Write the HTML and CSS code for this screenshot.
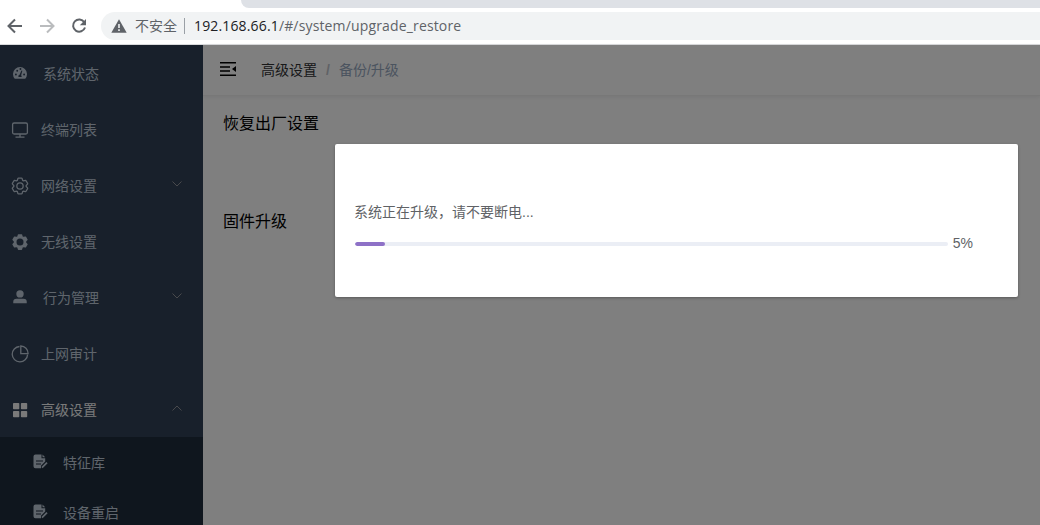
FILE: index.html
```html
<!DOCTYPE html>
<html lang="zh-CN">
<head>
<meta charset="utf-8">
<title>备份/升级</title>
<link rel="stylesheet" href="styles.css">
</head>
<body>
<svg class="defs" aria-hidden="true">
  <symbol id="gear" viewBox="0 0 1024 1024">
    <path d="M600.704 64a32 32 0 0 1 30.464 22.208l35.2 109.376c14.784 7.232 28.928 15.36 42.432 24.512l112.384-24.192a32 32 0 0 1 34.432 15.36L944.32 364.8a32 32 0 0 1-4.032 37.504l-77.12 85.12a357.120 357.120 0 0 1 0 49.024l77.12 85.248a32 32 0 0 1 4.032 37.504l-88.704 153.6a32 32 0 0 1-34.432 15.296L708.800 803.904c-13.440 9.088-27.648 17.280-42.368 24.512l-35.264 109.376A32 32 0 0 1 600.704 960H423.296a32 32 0 0 1-30.464-22.208L357.696 828.480a351.616 351.616 0 0 1-42.560-24.640l-112.320 24.256a32 32 0 0 1-34.432-15.360L79.680 659.200a32 32 0 0 1 4.032-37.504l77.120-85.248a357.120 357.120 0 0 1 0-48.896l-77.120-85.248A32 32 0 0 1 79.680 364.800l88.704-153.600a32 32 0 0 1 34.432-15.296l112.320 24.256c13.568-9.152 27.776-17.408 42.560-24.640l35.200-109.312A32 32 0 0 1 423.232 64H600.640z"/>
  </symbol>
  <symbol id="doc" viewBox="0 0 15 15">
    <path fill="currentColor" d="M2.500 .5h6v3.800h3.700v3.200L8 11.700v2.500H2.500a2 2 0 0 1-2-2v-9.700a2 2 0 0 1 2-2zM9.500.5l2.700 2.800H9.500z"/>
    <path d="M3 7h7M3 10h5" stroke="#1f2d3d" stroke-width="1.100"/>
    <path d="m9 13.700 5-5" stroke="currentColor" stroke-width="1.800"/>
  </symbol>
</svg>

<header class="browser">
  <div class="tabstrip"></div>
  <div class="toolbar">
    <svg class="nav" viewBox="0 0 16 16"><path d="M15 8H2M8 1.500 1.500 8 8 14.500"/></svg>
    <svg class="nav off" viewBox="0 0 16 16"><path d="M1 8h13M8 1.500 14.500 8 8 14.500"/></svg>
    <svg class="nav" viewBox="0 0 16 16"><path d="M13.300 4.200A6.100 6.100 0 1 0 14 9.500"/><path class="fill" d="M15 1v6.200H8.800z"/></svg>
    <div class="address">
      <svg class="warn" viewBox="0 0 16 14"><path fill="#5f6368" d="M8 .3 15.700 13.700H.3z"/><path d="M8 5v4M8 10.300v1.700" stroke="#f1f3f4" stroke-width="1.600"/></svg>
      <span class="insecure">不安全</span>
      <span class="url"><b>192.168.66.1</b>/#/system/upgrade_restore</span>
    </div>
  </div>
</header>

<div class="app">
  <nav class="sidebar">
    <a class="item wide"><svg class="icon small" viewBox="0 0 16 16"><path fill="currentColor" d="M2 14.500A8 8 0 1 1 14 14.500z"/><g fill="#304156"><circle cx="3.300" cy="9.700" r="1.100"/><circle cx="4.800" cy="5.400" r="1.100"/><circle cx="8.500" cy="3.500" r="1.100"/><circle cx="12.700" cy="9.700" r="1.100"/><path d="M6.200 12.500a2 2 0 0 1 1.300-2.500L9.700 5l1 .4L9.300 10.500a2 2 0 0 1 .5 2z"/></g></svg><span>系统状态</span></a>
    <a class="item"><svg class="icon line" viewBox="0 0 18 18"><rect x="1.600" y="2" width="14.800" height="11" rx="1.500"/><path d="M9 13v3M4.500 16.200h9"/></svg><span>终端列表</span></a>
    <a class="item"><svg class="icon gear-line" viewBox="0 0 1024 1024"><use href="#gear"/><circle cx="512" cy="512" r="180"/></svg><span>网络设置</span><svg class="arrow" viewBox="0 0 10 6"><path d="m.5.500 4.500 4.500L9.500.5"/></svg></a>
    <a class="item"><svg class="icon solid" viewBox="0 0 1024 1024"><use href="#gear"/><circle cx="512" cy="512" r="200" fill="#304156"/></svg><span>无线设置</span></a>
    <a class="item wide"><svg class="icon small solid" viewBox="0 0 16 16"><circle cx="8" cy="4.500" r="4.200"/><path d="M.3 15.200V13.500Q.3 10 4 10h8q3.700 0 3.700 3.500v1.700z"/></svg><span>行为管理</span><svg class="arrow" viewBox="0 0 10 6"><path d="m.5.500 4.500 4.500L9.500.5"/></svg></a>
    <a class="item"><svg class="icon line" viewBox="0 0 18 18"><path d="M8.500 1.500a7.700 7.700 0 1 0 8.100 8.100M9.800 1v7.600h7.300A7.500 7.500 0 0 0 9.800 1z"/></svg><span>上网审计</span></a>
    <a class="item active"><svg class="icon solid" viewBox="0 0 18 18"><rect x="2" y="2" width="6.300" height="6.300" rx=".8"/><rect x="9.900" y="2" width="6.300" height="6.300" rx=".8"/><rect x="2" y="9.900" width="6.300" height="6.300" rx=".8"/><rect x="9.900" y="9.900" width="6.300" height="6.300" rx=".8"/></svg><span>高级设置</span><svg class="arrow" viewBox="0 0 10 6"><path d="M.5 5.500 5 1l4.500 4.500"/></svg></a>
    <div class="submenu">
      <a class="subitem"><svg class="doc"><use href="#doc"/></svg><span>特征库</span></a>
      <a class="subitem"><svg class="doc"><use href="#doc"/></svg><span>设备重启</span></a>
    </div>
  </nav>
  <main class="main">
    <div class="navbar">
      <svg class="fold" viewBox="0 0 16 14"><path d="M0 .8h16M0 4.900h10M0 9.100h10M0 13.200h16" stroke="#000" stroke-width="1.500"/><path d="M16 4v6l-4-3z"/></svg>
      <span class="crumb">高级设置</span><span class="slash">/</span><span class="crumb current">备份/升级</span>
    </div>
    <section class="content">
      <h2>恢复出厂设置</h2>
      <h2>固件升级</h2>
    </section>
  </main>
  <div class="overlay">
    <div class="dialog">
      <p>系统正在升级，请不要断电...</p>
      <div class="progress"><div class="track"><div class="bar" style="width:5%"></div></div><span>5%</span></div>
    </div>
  </div>
</div>
</body>
</html>
```

FILE: styles.css
```css
* { box-sizing: border-box; }
body {
  margin: 0;
  width: 1040px;
  height: 525px;
  overflow: hidden;
  display: flex;
  flex-direction: column;
  background: #fff;
  font: 14px/20px "Liberation Sans", "Noto Sans CJK SC", sans-serif;
}
svg { display: block; flex: none; fill: none; }
.defs { position: absolute; width: 0; height: 0; }

.browser { height: 45px; border-bottom: 1px solid #d9dadc; flex: none; }
.tabstrip { height: 8px; margin-left: 241px; background: #dee1e6; border-bottom-left-radius: 8px; }
.toolbar { display: flex; align-items: center; height: 28px; margin-top: 4px; padding-left: 7px; }
.nav { width: 16px; height: 16px; margin-right: 16px; stroke: #5f6368; stroke-width: 2; }
.nav:nth-child(3) { margin-right: 14px; }
.nav.off { stroke: #babcbe; }
.nav .fill { fill: #5f6368; stroke: none; }
.address {
  flex: 1;
  display: flex;
  align-items: center;
  height: 28px;
  padding-left: 10px;
  border-radius: 14px 0 0 14px;
  background: #f1f3f4;
  color: #5f6368;
}
.warn { width: 16px; height: 14px; }
.insecure { margin-left: 8px; padding-right: 7px; border-right: 1px solid #9aa0a6; line-height: 16px; }
.url { margin-left: 9px; font-family: "Open Sans", sans-serif; font-size: 14px; letter-spacing: .15px; white-space: nowrap; }
.url b { font-weight: 400; color: #202124; }

.app { position: relative; flex: 1; display: flex; min-height: 0; }
.sidebar { width: 203px; background: #304156; color: #bfcbd9; overflow: hidden; }
.item { display: flex; align-items: center; height: 56px; padding: 2px 21px 0 11px; }
.item span { margin-left: 12px; }
.icon { width: 18px; height: 18px; }
.icon.small { width: 14px; height: 14px; margin: 0 2px 2px; }
.item.wide span { margin-left: 14px; }
.line { stroke: currentColor; stroke-width: 1.300; }
.solid { fill: currentColor; }
.gear-line { stroke: currentColor; stroke-width: 72; }
.arrow { width: 10px; height: 6px; margin: 0 0 4px auto; stroke: #909399; stroke-width: 1; }
.active { color: #f4f4f5; }
.submenu { height: 100px; background: #1f2d3d; }
.subitem { display: flex; align-items: center; height: 50px; padding: 1px 0 0 33px; }
.doc { width: 15px; height: 15px; margin-bottom: 2px; }
.subitem span { margin-left: 15px; }

.main { flex: 1; background: #fff; }
.navbar {
  display: flex;
  align-items: center;
  height: 51px;
  padding-left: 17px;
  border-bottom: 1px solid #f0f0f0;
  box-shadow: 0 1px 4px rgba(0, 21, 41, .08);
}
.fold { width: 16px; height: 14px; margin: 0 25px 2px 0; fill: #000; }
.crumb { color: #303133; }
.slash { margin: 0 9px; color: #c0c4cc; font-weight: 700; }
.current { color: #97a8be; }
.content { display: flex; flex-direction: column; gap: 74px; padding: 16px 20px; }
.content h2 { margin: 0; font-size: 16px; line-height: 24px; font-weight: 400; color: #000; }

.overlay { position: absolute; inset: 0; padding: 99px 22px 0 335px; background: rgba(0, 0, 0, .5); }
.dialog {
  height: 153px;
  padding: 58px 45px 0 20px;
  border-radius: 2px;
  background: #fff;
  box-shadow: 0 1px 3px rgba(0, 0, 0, .3);
  color: #606266;
}
.dialog p { margin: 0 0 12px -1px; }
.progress { display: flex; align-items: center; }
.track { width: 593px; height: 4px; border-radius: 2px; background: #ebeef5; overflow: hidden; }
.bar { height: 4px; border-radius: 2px; background: #8e71c7; }
.progress span { margin-left: 5px; line-height: 18px; padding-bottom: 2px; }
```
